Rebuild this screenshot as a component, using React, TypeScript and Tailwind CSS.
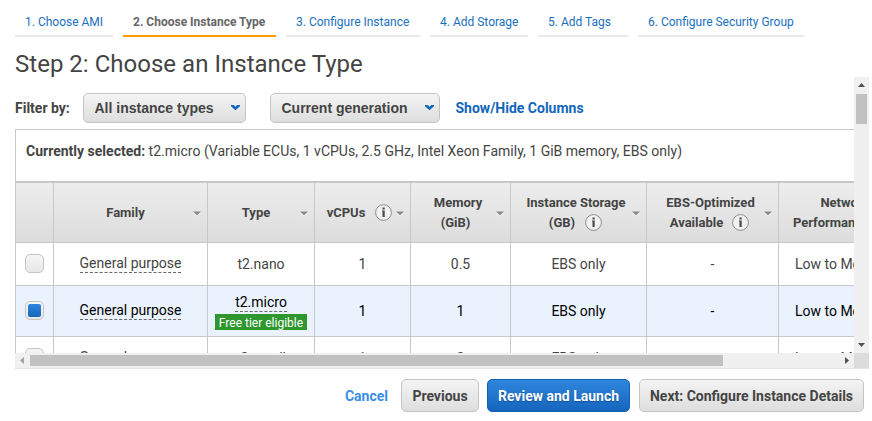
import React from "react";

const tabs = [
  { label: "1. Choose AMI", width: "w-[98px]" },
  { label: "2. Choose Instance Type", width: "w-[153px]", active: true },
  { label: "3. Configure Instance", width: "w-[134px]" },
  { label: "4. Add Storage", width: "w-[98px]" },
  { label: "5. Add Tags", width: "w-[90px]" },
  { label: "6. Configure Security Group", width: "w-[166px]" },
];

const GRID = "grid grid-cols-[38px_154px_107px_96px_100px_136px_132px_138px]";
const CELL = "flex items-center justify-center border-r border-b border-[#c8c8c8]";
const GREY_BUTTON =
  "rounded-[5px] border border-[#c4c4c4] bg-linear-to-b from-[#f4f4f4] to-[#dedede] font-bold text-[#444]";

function SortArrow() {
  return (
    <svg width="8" height="6" viewBox="0 0 8 6" className="absolute top-[28px] right-[6px]">
      <path d="M0 1.5h8L4 5.5z" fill="#fff" />
      <path d="M0 0.5h8L4 4.5z" fill="#8a8a8a" />
    </svg>
  );
}

function Info() {
  return (
    <svg width="17" height="17" viewBox="0 0 17 17" className="shrink-0">
      <circle cx="8.5" cy="8.5" r="7.9" fill="#f1f1f1" stroke="#8c8c8c" strokeWidth="1" />
      <path d="M7.5 3.5h2.2v2h-2.2zM7 6.5h2.7v6.5h-2.2V7.5H7z" fill="#484848" />
    </svg>
  );
}

function Head({ children, sort = true }: { children?: React.ReactNode; sort?: boolean }) {
  return (
    <div className={`${CELL} relative text-center text-[13px] leading-5 font-bold`}>
      {children}
      {sort && <SortArrow />}
    </div>
  );
}

function Checkbox({ checked = false }: { checked?: boolean }) {
  return (
    <span className="mb-[2px] flex size-[19px] items-center justify-center rounded-[5px] border border-[#c4c4c4] bg-linear-to-b from-[#f5f5f5] to-[#e8e8e8]">
      {checked && <span className="size-[13px] rounded-[2px] bg-linear-to-b from-[#2e86dc] to-[#1565bd]" />}
    </span>
  );
}

function Dashed({ children }: { children: React.ReactNode }) {
  return <span className="border-b border-dashed border-[#666] leading-[18px]">{children}</span>;
}

function Row({ type, cpus, memory, selected = false, height }: {
  type: string; cpus: string; memory: string; selected?: boolean; height: string;
}) {
  return (
    <div className={`${GRID} ${height} text-[14px] ${selected ? "bg-[#eaf2fe] text-black" : "text-[#444]"}`}>
      <div className={CELL}><Checkbox checked={selected} /></div>
      <div className={`${CELL} pb-px`}><Dashed>General purpose</Dashed></div>
      <div className={`${CELL} flex-col`}>
        {selected ? (
          <>
            <span className="flex h-[19px]"><Dashed>{type}</Dashed></span>
            <span className="mt-[2px] h-4 bg-[#2f972f] px-1 text-[12px] leading-[18px] whitespace-nowrap text-white">Free tier eligible</span>
          </>
        ) : type}
      </div>
      <div className={CELL}>{cpus}</div>
      <div className={CELL}>{memory}</div>
      <div className={CELL}>EBS only</div>
      <div className={CELL}>-</div>
      <div className={`${CELL} whitespace-nowrap`}>Low to Moderate</div>
    </div>
  );
}

function Select({ label, className }: { label: string; className: string }) {
  return (
    <div className={`${GREY_BUTTON} ${className} flex h-[30px] items-center justify-between pr-[5px] pl-[10.5px] font-['Liberation_Sans',sans-serif] text-[14px]`}>
      {label}
      <svg width="9" height="6" viewBox="0 0 9 6">
        <path d="M0 0h2.7l1.8 1.7L6.3 0H9v1.2L4.5 5.2L0 1.2z" fill="#1166bb" />
      </svg>
    </div>
  );
}

export default function App() {
  return (
    <div className="h-[421px] w-[872px] overflow-hidden bg-white pt-[8px] pl-[15px] font-[Roboto,sans-serif] text-[#444]">
      <nav className="flex gap-[10px]">
        {tabs.map((t) => (
          <div
            key={t.label}
            className={`${t.width} h-[29px] border-b-2 pl-[10px] text-[12px] leading-[28px] whitespace-nowrap ${
              t.active ? "border-[#f90] font-bold text-[#666]" : "border-[#eaeaea] text-[#1a6fc0]"
            }`}
          >
            {t.label}
          </div>
        ))}
      </nav>
      <h1 className="h-[40px] text-[24px] leading-[54px] tracking-[0.02px]">Step 2: Choose an Instance Type</h1>

      <div className="grid h-[292px] w-[854px] grid-cols-[839px_15px] grid-rows-[276px_15px] border-b border-[#e4e4e4]">
        <div className="overflow-hidden">
          <div className="flex h-[52px] items-start pt-4 text-[14px] leading-[30px]">
            <span className="w-[68px] font-bold whitespace-nowrap">Filter by:</span>
            <Select label="All instance types" className="w-[163px]" />
            <Select label="Current generation" className="ml-6 w-[170px]" />
            <span className="ml-[15.5px] font-bold text-[#1166bb]">Show/Hide Columns</span>
          </div>
          <div className="w-[902px] border-t border-l border-[#c8c8c8]">
            <div className="h-[51px] pt-[11px] pl-[10px] text-[14px] leading-[21px] tracking-[0.01px]">
              <b>Currently selected:</b> t2.micro (Variable ECUs, 1 vCPUs, 2.5 GHz, Intel Xeon Family, 1 GiB memory, EBS only)
            </div>
            <div className={`${GRID} h-[62px] border-t-2 border-[#c8c8c8] bg-linear-to-b from-[#ededed] to-[#dcdcdc]`}>
              <Head sort={false} />
              <Head><span className="mr-[10px]">Family</span></Head>
              <Head><span className="mr-[10px]">Type</span></Head>
              <Head>
                <span className="mr-[6px] flex items-center gap-[10px]">vCPUs <Info /></span>
              </Head>
              <Head>
                <div className="mr-[5px] flex flex-col items-center">Memory
                  <span className="mr-[5px]">(GiB)</span>
                </div>
              </Head>
              <Head>
                <div className="mr-[5px] flex flex-col items-center whitespace-nowrap">Instance Storage
                  <span className="mr-px flex items-center gap-[10px]">(GB) <Info /></span>
                </div>
              </Head>
              <Head>
                <div className="mr-[4px] flex flex-col items-center whitespace-nowrap">EBS-Optimized
                  <span className="mr-[2px] flex items-center gap-[9px]">Available <Info /></span>
                </div>
              </Head>
              <Head sort={false}>
                <div className="mr-[5px] flex flex-col items-center whitespace-nowrap">Network
                  <span className="mr-px flex items-center gap-[10px]">Performance <Info /></span>
                </div>
              </Head>
            </div>
            <Row type="t2.nano" cpus="1" memory="0.5" height="h-[43px]" />
            <Row type="t2.micro" cpus="1" memory="1" selected height="h-[51px]" />
            <Row type="t2.small" cpus="1" memory="2" height="h-[43px]" />
          </div>
        </div>

        <div className="flex flex-col items-center justify-between bg-[#f0f0f0] pt-[6px] pb-[6px]">
          <div className="flex flex-col items-center gap-[7px]">
            <svg width="7" height="4" viewBox="0 0 7 4"><path d="M0 4h7L3.5 0z" fill="#505050" /></svg>
            <div className="h-[30px] w-[11px] bg-[#c1c1c1]" />
          </div>
          <svg width="7" height="4" viewBox="0 0 7 4"><path d="M0 0h7L3.5 4z" fill="#505050" /></svg>
        </div>

        <div className="flex items-center bg-[#f0f0f0] pr-[5px] pl-[5px]">
          <svg width="4" height="7" viewBox="0 0 4 7"><path d="M4 0v7L0 3.5z" fill="#a3a3a3" /></svg>
          <div className="ml-[6px] h-[11px] w-[693px] bg-[#c1c1c1]" />
          <svg width="4" height="7" viewBox="0 0 4 7" className="ml-auto"><path d="M0 0v7L4 3.5z" fill="#505050" /></svg>
        </div>
        <div className="bg-[#dcdcdc]" />
      </div>

      <div className="mt-[10px] flex h-[33px] w-[849px] items-stretch justify-end text-[14px] leading-[34px] font-bold whitespace-nowrap">
        <span className="mr-[13px] text-[#3a8ee6]">Cancel</span>
        <button className={`${GREY_BUTTON} w-[78px] leading-[33px]`}>Previous</button>
        <button className="ml-2 w-[143px] rounded-[5px] border border-[#1560b0] bg-linear-to-b from-[#2e86dc] to-[#1565bd] leading-[33px] text-white [text-shadow:0_1px_1px_#0d4d94]">Review and Launch</button>
        <button className={`${GREY_BUTTON} ml-[9px] w-[225px] leading-[33px]`}>Next: Configure Instance Details</button>
      </div>
    </div>
  );
}
